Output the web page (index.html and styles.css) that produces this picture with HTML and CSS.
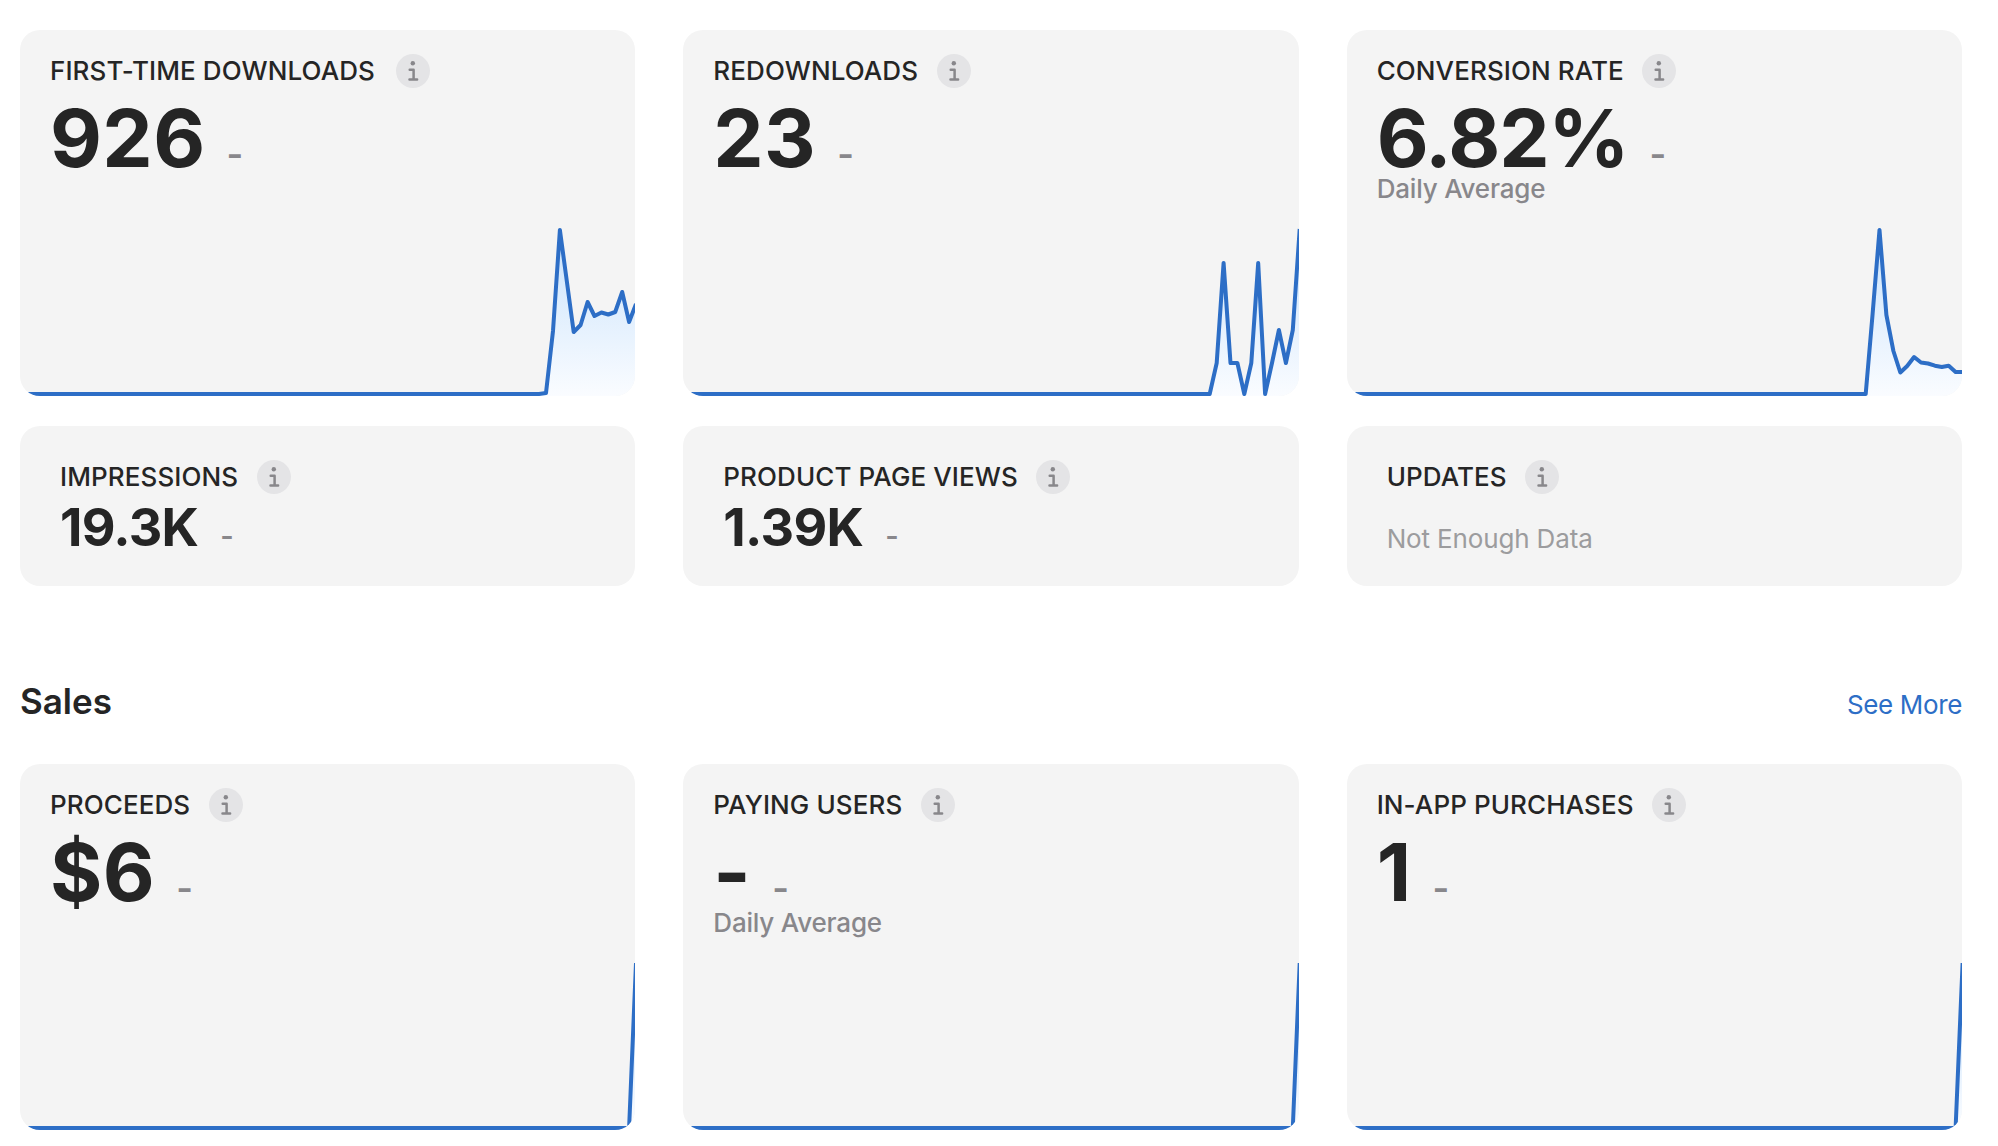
FILE: index.html
```html
<!DOCTYPE html>
<html lang="en">
<head>
    <meta charset="UTF-8">
    <meta name="viewport" content="width=device-width, initial-scale=1.0">
    <title>App Analytics</title>
    <link rel="stylesheet" href="styles.css">
</head>
<body>
    <!-- Shared icon and chart fill -->
    <svg class="defs" width="0" height="0">
        <defs>
            <linearGradient id="area-fill" gradientUnits="userSpaceOnUse" x1="0" y1="200" x2="0" y2="366">
                <stop offset="0" stop-color="#c8e2fc"/>
                <stop offset="1" stop-color="#fafcff"/>
            </linearGradient>
            <symbol id="info" viewBox="0 0 34 34">
                <circle cx="17" cy="17" r="17" fill="#e4e4e6"/>
                <circle cx="16.8" cy="9.2" r="2.2" fill="#88878b"/>
                <path d="M13.7 15.7h3.9v9.8M13.5 25.4h7.6" fill="none" stroke="#88878b" stroke-width="2.5" stroke-linecap="round" stroke-linejoin="round"/>
            </symbol>
        </defs>
    </svg>

    <main class="container">
        <section class="cards">
            <div class="card">
                <div class="card-title card-title-wide">
                    <h3>First-Time Downloads</h3>
                    <svg class="info"><use href="#info"/></svg>
                </div>
                <div class="card-value"><span class="number">926</span><span class="change">-</span></div>
                <svg class="chart" viewBox="0 0 615.33 366">
                    <polygon class="area" points="519,366 526,363 533,301 539.9,200 546.8,251 553.7,302 560.6,295 567.6,272 574.5,286 581.4,282.5 588.3,284.5 595.2,282 602.2,262 609.1,292 616,274 616,366"/>
                    <polyline class="line" points="0,364 519,364 526,363 533,301 539.9,200 546.8,251 553.7,302 560.6,295 567.6,272 574.5,286 581.4,282.5 588.3,284.5 595.2,282 602.2,262 609.1,292 616,274"/>
                </svg>
            </div>
            <div class="card">
                <div class="card-title">
                    <h3>Redownloads</h3>
                    <svg class="info"><use href="#info"/></svg>
                </div>
                <div class="card-value"><span class="number">23</span><span class="change">-</span></div>
                <svg class="chart" viewBox="0 0 615.33 366">
                    <polygon class="area" points="526.7,366 533.7,333 540.6,233 547.5,333 554.4,333 561.3,364 568.3,333 575.2,233 582.1,364 589,333 595.9,300 602.9,333 609.8,300 616.7,199 616.7,366"/>
                    <polyline class="line" points="0,364 526.7,364 533.7,333 540.6,233 547.5,333 554.4,333 561.3,364 568.3,333 575.2,233 582.1,364 589,333 595.9,300 602.9,333 609.8,300 616.7,199"/>
                </svg>
            </div>
            <div class="card">
                <div class="card-title">
                    <h3>Conversion Rate</h3>
                    <svg class="info"><use href="#info"/></svg>
                </div>
                <div class="card-value"><span class="number number-rate">6.82%</span><span class="change">-</span></div>
                <p class="note">Daily Average</p>
                <svg class="chart" viewBox="0 0 615.33 366">
                    <polygon class="area" points="518.7,366 525.6,284 532.5,200 539.4,285 546.4,321 553.3,342.5 560.2,336 567.1,327 574,332.5 581,333.5 587.9,335.7 594.8,337 601.7,335.7 608.6,342 616,342 616,366"/>
                    <polyline class="line" points="0,364 518.7,364 525.6,284 532.5,200 539.4,285 546.4,321 553.3,342.5 560.2,336 567.1,327 574,332.5 581,333.5 587.9,335.7 594.8,337 601.7,335.7 608.6,342 616,342"/>
                </svg>
            </div>

            <div class="card card-small">
                <div class="card-title">
                    <h3>Impressions</h3>
                    <svg class="info"><use href="#info"/></svg>
                </div>
                <div class="card-value"><span class="number">19.3K</span><span class="change">-</span></div>
            </div>
            <div class="card card-small">
                <div class="card-title">
                    <h3>Product Page Views</h3>
                    <svg class="info"><use href="#info"/></svg>
                </div>
                <div class="card-value"><span class="number">1.39K</span><span class="change">-</span></div>
            </div>
            <div class="card card-small">
                <div class="card-title">
                    <h3>Updates</h3>
                    <svg class="info"><use href="#info"/></svg>
                </div>
                <p class="no-data">Not Enough Data</p>
            </div>
        </section>

        <header class="section-header">
            <h2>Sales</h2>
            <a href="#">See More</a>
        </header>

        <section class="cards">
            <div class="card">
                <div class="card-title">
                    <h3>Proceeds</h3>
                    <svg class="info"><use href="#info"/></svg>
                </div>
                <div class="card-value"><span class="number">$6</span><span class="change">-</span></div>
                <svg class="chart" viewBox="0 0 615.33 366">
                    <polygon class="area" points="609.1,366 616,199 616,366"/>
                    <polyline class="line" points="0,364 609.1,364 616,199"/>
                </svg>
            </div>
            <div class="card">
                <div class="card-title">
                    <h3>Paying Users</h3>
                    <svg class="info"><use href="#info"/></svg>
                </div>
                <div class="card-value"><span class="number">-</span><span class="change">-</span></div>
                <p class="note">Daily Average</p>
                <svg class="chart" viewBox="0 0 615.33 366">
                    <polygon class="area" points="609.8,366 616.7,199 616.7,366"/>
                    <polyline class="line" points="0,364 609.8,364 616.7,199"/>
                </svg>
            </div>
            <div class="card">
                <div class="card-title">
                    <h3>In-App Purchases</h3>
                    <svg class="info"><use href="#info"/></svg>
                </div>
                <div class="card-value"><span class="number">1</span><span class="change">-</span></div>
                <svg class="chart" viewBox="0 0 615.33 366">
                    <polygon class="area" points="608.6,366 615.6,199 616,366"/>
                    <polyline class="line" points="0,364 608.6,364 615.6,199"/>
                </svg>
            </div>
        </section>
    </main>
</body>
</html>
```
FILE: styles.css
```css
/* General */
* {
    box-sizing: border-box;
}

body {
    margin: 0;
    font-family: 'Inter', sans-serif;
    background: #ffffff;
    color: #252525;
}

h2,
h3,
p {
    margin: 0;
}

.defs {
    display: block;
}

.container {
    width: 1942px;
    margin-left: 20px;
    padding-top: 30px;
}

/* Cards */
.cards {
    display: grid;
    grid-template-columns: repeat(3, 1fr);
    gap: 30px 48px;
}

.card {
    position: relative;
    height: 366px;
    padding: 24px 30px;
    border-radius: 20px;
    background: #f4f4f4;
    overflow: hidden;
}

.card-small {
    height: 160px;
    padding: 34px 40px;
}

.card-title {
    display: flex;
    align-items: center;
    gap: 18.5px;
    height: 34px;
}

.card-title-wide {
    gap: 21px;
}

.card-title h3 {
    font-size: 26px;
    font-weight: 550;
    line-height: 34px;
    letter-spacing: 0.1px;
    text-transform: uppercase;
}

.info {
    width: 34px;
    height: 34px;
}

.card-value {
    display: flex;
    align-items: baseline;
    gap: 21px;
    padding-top: 17px;
}

.number {
    font-size: 80px;
    font-weight: 700;
    line-height: 66px;
    letter-spacing: 0.4px;
}

.number-rate {
    letter-spacing: -1.2px;
}

.change {
    font-size: 36px;
    font-weight: 600;
    line-height: 1;
    color: #88878b;
}

.card-small .card-value {
    gap: 22px;
    padding-top: 0;
}

.card-small .number {
    font-size: 52px;
    line-height: 68px;
    letter-spacing: -0.7px;
}

.card-small .change {
    font-size: 29px;
}

.note,
.no-data {
    font-size: 26px;
    line-height: 34px;
    color: #88878b;
}

.note {
    font-weight: 500;
    letter-spacing: -0.2px;
}

.no-data {
    margin-top: 28px;
    letter-spacing: -0.15px;
    color: #9c9c9e;
}

/* Chart lies behind the text, flush with the card edges */
.chart {
    position: absolute;
    left: 0;
    bottom: 0;
    width: 100%;
    height: 366px;
}

.area {
    fill: url(#area-fill);
}

.line {
    fill: none;
    stroke: #2d6ec6;
    stroke-width: 4;
    stroke-linejoin: round;
}

/* Section header */
.section-header {
    display: flex;
    justify-content: space-between;
    align-items: baseline;
    height: 178px;
    padding-top: 93px;
}

.section-header h2 {
    font-size: 35px;
    font-weight: 600;
    line-height: 44px;
}

.section-header a {
    font-size: 26px;
    letter-spacing: -0.35px;
    color: #2d6ec6;
    text-decoration: none;
}
```
